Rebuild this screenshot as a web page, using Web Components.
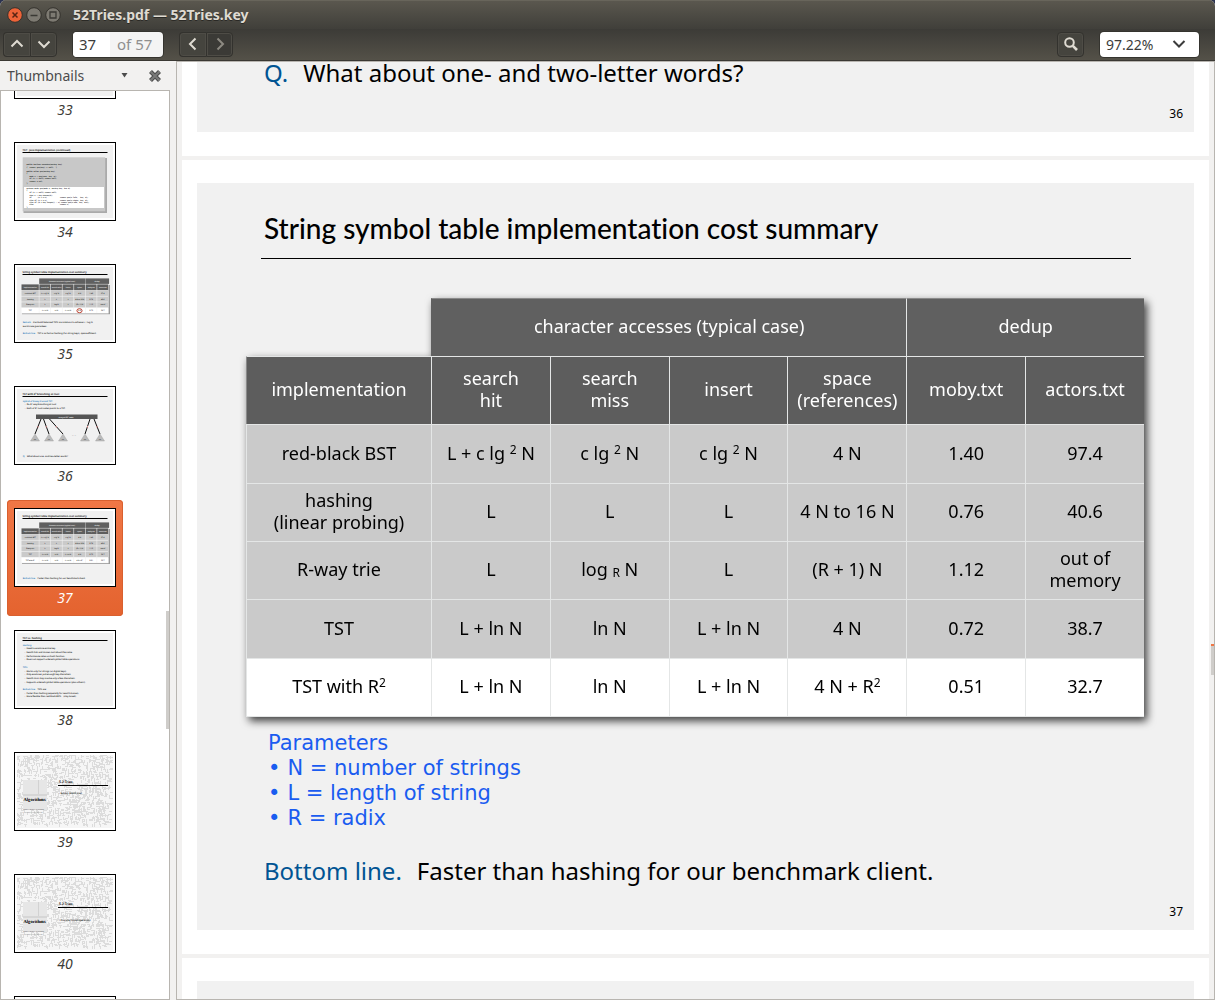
<!DOCTYPE html>
<html lang="en">
<head>
<meta charset="utf-8">
<title>52Tries.pdf — 52Tries.key</title>
<style>
  html, body { height: 100%; margin: 0; }
  body { background: #2c3350; overflow: hidden; font-family: "Noto Sans", "Open Sans", sans-serif; font-size: 14px; color: #3c3b37; }
</style>
</head>
<body>
<pdf-window>
  <pdf-titlebar slot="title">52Tries.pdf — 52Tries.key</pdf-titlebar>
  <pdf-toolbar slot="toolbar"></pdf-toolbar>
  <thumb-panel slot="side">
    <thumb-item page="33" cut></thumb-item>
    <thumb-item page="34"></thumb-item>
    <thumb-item page="35"></thumb-item>
    <thumb-item page="36"></thumb-item>
    <thumb-item page="37" selected></thumb-item>
    <thumb-item page="38"></thumb-item>
    <thumb-item page="39"></thumb-item>
    <thumb-item page="40"></thumb-item>
    <thumb-item page="41" tail></thumb-item>
  </thumb-panel>
  <doc-view slot="main">
    <slide-page cut number="36">
      <slide-line term="Q.">What about one- and two-letter words?</slide-line>
    </slide-page>
    <slide-page number="37" heading="String symbol table implementation cost summary">
      <cost-table></cost-table>
      <param-notes></param-notes>
      <slide-line term="Bottom line.">Faster than hashing for our benchmark client.</slide-line>
    </slide-page>
    <slide-page></slide-page>
  </doc-view>
</pdf-window>

<script>
const define = (name, html, setup) => {
  const tpl = document.createElement('template');
  tpl.innerHTML = html;
  customElements.define(name, class extends HTMLElement {
    constructor() {
      super();
      this.attachShadow({ mode: 'open' }).append(tpl.content.cloneNode(true));
    }
    connectedCallback() { if (setup) setup(this, this.shadowRoot); }
  });
};

define('pdf-window', `
  <style>
    :host { display: flex; flex-direction: column; height: 100vh; border-radius: 6px 6px 0 0; overflow: hidden; background: #f2f1f0; }
    .body { flex: 1; min-height: 0; display: flex; }
  </style>
  <slot name="title"></slot>
  <slot name="toolbar"></slot>
  <div class="body"><slot name="side"></slot><slot name="main"></slot></div>`);

define('pdf-titlebar', `
  <style>
    :host { display: flex; align-items: center; gap: 3px; height: 29px; padding-left: 7px; box-sizing: border-box;
      background: linear-gradient(#5b584f, #403f3a); box-shadow: inset 0 1px #68655b; color: #dfdbd2; }
    button { display: block; width: 16px; height: 16px; padding: 0; border: 0; background: none; }
    svg { display: block; }
    h1 { margin: 0 0 0 9px; font-size: 14px; line-height: 20px; font-weight: 700; text-shadow: 0 1px #2a2925; }
  </style>
  <button aria-label="Close"><svg width="16" height="16"><circle cx="8" cy="8" r="7.3" fill="#ee6338" stroke="#34322d"/><path d="M5.5 5.5l5 5m0-5l-5 5" stroke="#5a2413" stroke-width="1.5"/></svg></button>
  <button aria-label="Minimize"><svg width="16" height="16"><circle cx="8" cy="8" r="7.3" fill="#7d7a72" stroke="#34322d"/><path d="M4.5 8.5h7" stroke="#3a3934" stroke-width="1.3"/></svg></button>
  <button aria-label="Maximize"><svg width="16" height="16"><circle cx="8" cy="8" r="7.3" fill="#7d7a72" stroke="#34322d"/><path d="M5 5h6v6H5z" fill="none" stroke="#3a3934" stroke-width="1.3"/></svg></button>
  <h1><slot></slot></h1>`);

define('pdf-toolbar', `
  <style>
    :host { display: flex; align-items: center; height: 32px; box-sizing: border-box; padding: 0 16px 1px 3px;
      background: linear-gradient(#3c3b37, #545148); border-bottom: 1px solid #3a3833; }
    .group { display: flex; }
    button { display: flex; align-items: center; justify-content: center; width: 27px; height: 25px; padding: 0; box-sizing: border-box;
      background: #45443e; border: 1px solid #33322e; color: #dfdbd2; box-shadow: inset 0 0 0 1px #4e4c46; }
    .group button:first-child { border-radius: 4px 0 0 4px; border-right: 0; }
    .group button:last-child { border-radius: 0 4px 4px 0; }
    .group button:only-child { border-radius: 4px; border-right: 1px solid #33322e; }
    button:disabled { background: #3b3a36; color: #8d8a82; }
    svg { display: block; fill: none; stroke: currentColor; stroke-width: 2; }
    .entry { display: flex; align-items: center; width: 90px; height: 25px; margin: 0 16px; background: #f4f4f4; border-radius: 4px; overflow: hidden; box-shadow: 0 0 0 1px #35342f; }
    input { width: 37px; height: 25px; box-sizing: border-box; padding: 0 0 0 6px; border: 0; background: #fff; font: inherit; font-size: 15px; color: #3c3c3c; }
    .entry span { padding-left: 7px; font-size: 15px; line-height: 25px; color: #8f8f8f; }
    .space { flex: 1; }
    .zoom { display: grid; width: 99px; height: 25px; margin-left: 16px; border-radius: 4px; background: #fff; box-shadow: 0 0 0 1px #35342f; align-items: center; }
    .zoom > * { grid-area: 1 / 1; }
    select { appearance: none; width: 100%; height: 25px; border: 0; padding: 0 0 0 6px; background: none; font: inherit; color: #3c3c3c; }
    .zoom svg { justify-self: end; margin-right: 13px; color: #3c3c3c; pointer-events: none; }
  </style>
  <div class="group">
    <button aria-label="Previous page"><svg width="14" height="14"><path d="M1.500 9.500L7 4l5.500 5.500"/></svg></button>
    <button aria-label="Next page"><svg width="14" height="14"><path d="M1.500 4.500L7 10l5.500-5.500"/></svg></button>
  </div>
  <div class="entry"><input id="pg" value="37" aria-label="Page"><span>of 57</span></div>
  <div class="group">
    <button aria-label="Back"><svg width="14" height="14"><path d="M9.500 1.500L4 7l5.500 5.500"/></svg></button>
    <button aria-label="Forward" disabled><svg width="14" height="14"><path d="M4.500 1.500L10 7l-5.500 5.500"/></svg></button>
  </div>
  <div class="space"></div>
  <div class="group"><button aria-label="Find"><svg width="16" height="16"><circle cx="6.500" cy="6.500" r="4.300"/><path d="M9.800 9.800L14 14" stroke-width="2.600"/></svg></button></div>
  <div class="zoom"><select aria-label="Zoom"><option>97.22%</option></select><svg width="14" height="14"><path d="M1.500 4L7 9.500 12.500 4"/></svg></div>`);

define('thumb-panel', `
  <style>
    :host { display: flex; flex-direction: column; width: 170px; flex: none; margin-right: 6px; }
    header { display: flex; align-items: center; height: 29px; padding: 0 8px 0 7px; }
    header button { display: flex; align-items: center; padding: 0; border: 0; background: none; font: inherit; color: #4c4c4c; line-height: 20px; }
    .pick { flex: 1; justify-content: space-between; }
    .pick svg { margin-right: 20px; }
    svg { display: block; }
    .list { flex: 1; min-height: 0; overflow: hidden; display: flex; background: #fff; border: 1px solid #b8b5b0; }
    .items { flex: 1; display: flex; flex-direction: column; gap: 6px; padding-left: 6px; }
    .bar { width: 3px; height: 118px; margin-top: 520px; background: #cfcdca; }
  </style>
  <header>
    <button class="pick">Thumbnails<svg width="7" height="5"><path d="M.5 0h6l-3 4.500z" fill="#4c4c4c"/></svg></button>
    <button aria-label="Close side pane"><svg width="14" height="14"><path d="M2.500 2.500l9 9m0-9l-9 9" stroke="#4c4c4c" stroke-width="4.200"/><path d="M2.500 2.500l9 9m0-9l-9 9" stroke="#7a7a7a" stroke-width="2"/></svg></button>
  </header>
  <div class="list"><div class="items"><slot></slot></div><div class="bar"></div></div>`);

/* ---- miniature slides, drawn in a 100 x 77 canvas ---- */
const BLUE = '#0067b0';
const text = (x, y, s, size = 2, fill = '#000', extra = '') =>
  `<text x="${x}" y="${y}" font-size="${size}" fill="${fill}" xml:space="preserve" ${extra}>${s}</text>`;
const box = (x, y, w, h, fill) => `<rect x="${x}" y="${y}" width="${w}" height="${h}" fill="${fill}"/>`;
const base = (title) => box(2, 2, 96, 73, '#f1f1f1') + text(7.5, 8, title, 2.6, '#000', 'font-weight="600"') + box(7.5, 9, 85, 1, '#000');
const cols = [6.3, 24.200, 35.700, 47.300, 58.900, 70.400, 82, 93.600];
const heads = ['implementation', 'search hit', 'search miss', 'insert', 'space', 'moby.txt', 'actors.txt'];
const data = [
  ['red-black BST', 'L + c lg² N', 'c lg² N', 'c lg² N', '4 N', '1.40', '97.4'],
  ['hashing', 'L', 'L', 'L', '4 N to 16 N', '0.76', '40.6'],
  ['R-way trie', 'L', 'log N', 'L', '(R + 1) N', '1.12', 'out of'],
  ['TST', 'L + ln N', 'ln N', 'L + ln N', '4 N', '0.72', '38.7'],
  ['TST with R²', 'L + ln N', 'ln N', 'L + ln N', '4 N + R²', '0.51', '32.7']
];
const miniTable = (n) => {
  const mid = 'text-anchor="middle"';
  let s = box(7, 20, 88, 6 + n * 5.800, '#999') + box(24.200, 13.400, 46.200, 5.500, '#606060') + box(70.600, 13.400, 23.500, 5.500, '#606060') +
    text(47, 17, 'character accesses (typical case)', 1.700, '#fff', mid) + text(82, 17, 'dedup', 1.700, '#fff', mid);
  const row = (cells, y, h, bg, fg) => cells.forEach((c, i) => {
    s += box(cols[i] + .2, y + .2, cols[i + 1] - cols[i] - .6, h - .7, bg) + text((cols[i] + cols[i + 1]) / 2, y + h / 2 + .5, c, 1.700, fg, mid);
  });
  s += box(6.3, 19.2, 87.3, 6.5 + n * 5.7, '#f1f1f1');
  row(heads, 19.200, 6.500, '#5d5d5d', '#fff');
  for (let i = 0; i < n; i++) row(data[i], 25.700 + i * 5.700, 5.700, i === n - 1 ? '#fff' : '#cacaca', '#000');
  return s;
};
const cover = (line) => {
  let seed = 7, d = '';
  const rnd = () => (seed = (seed * 16807) % 2147483647) / 2147483647;
  for (let i = 0; i < 1300; i++) {
    const x = 2 + Math.floor(rnd() * 94), y = 2 + Math.floor(rnd() * 70);
    d += rnd() < .5 ? `M${x} ${y}h3v1h-3z` : `M${x} ${y}h1v3h-1z`;
  }
  return box(2, 2, 96, 73, '#f6f6f6') + `<path d="${d}" fill="#dcdcdc" shape-rendering="crispEdges"/>` + box(8, 27, 24, 30, '#e6e6e6') + box(23, 27, 1, 16, '#d2d2d2') +
    box(8, 41, 24, 2, '#d6d6d6') + text(8.5, 48, 'Algorithms', 4.600, '#000', 'font-weight="700" font-family="Liberation Serif"') +
    text(8.5, 57, 'ROBERT SEDGEWICK | KEVIN WAYNE', 1.200) + text(8.5, 60, 'http://algs4.cs.princeton.edu', 1.400, '#777') +
    text(44, 30, '5.2 Tries', 3.4, '#000', 'font-weight="600"') + box(43, 32, 50, 1, '#000') + text(44, line === 0 ? 41 : 46, ['‣ ternary search tries', '‣ character-based operations'][line], 2.300);
};
const lines = (rows) => rows.map(([y, s, fill]) => text(fill ? 7.700 : 8.700, y, s, 2.200, fill || '#000')).join('');
const minis = {
  33: () => base(''),
  34: () => base('TST:  Java implementation (continued)') + box(8.500, 15, 83.500, 55, '#aaa') + box(7.700, 14.300, 82.500, 54, '#c8c8c8') + box(9, 44, 80, 21, '#fff') +
    [[22, 'public boolean contains(String key)'], [25, '{  return get(key) != null;  }'], [29, 'public Value get(String key)'], [31, '{'], [33.700, '   Node x = get(root, key, 0);'], [36, '   if (x == null) return null;'], [39, '   return x.val;'], [41, '}'],
     [46, 'private Node get(Node x, String key, int d)'], [48, '{'], [50, '   if (x == null) return null;'], [53, '   char c = key.charAt(d);'], [55, '   if      (c &lt; x.c)             return get(x.left,  key, d);'], [58, '   else if (c > x.c)             return get(x.right, key, d);'], [60, '   else if (d &lt; key.length() - 1) return get(x.mid, key, d+1);'], [62, '   else                          return x;'], [65, '}']]
      .map(([y, s]) => text(11.500, y, s, 1.700, '#000', 'font-weight="700" font-family="Liberation Mono"')).join(''),
  35: () => base('String symbol table implementation cost summary') + miniTable(4) + `<ellipse cx="64.500" cy="45.700" rx="2.600" ry="2" fill="none" stroke="#b5301f" stroke-width=".9"/>` +
    text(7.700, 58, 'Remark.', 2.200, BLUE) + text(18, 58, 'Can build balanced TSTs via rotations to achieve L + log N', 2.200) + text(7.700, 62, 'worst-case guarantees.', 2.200) +
    text(7.700, 69, 'Bottom line.', 2.200, BLUE) + text(22.500, 69, 'TST is as fast as hashing (for string keys), space efficient.', 2.200),
  36: () => base('TST with R² branching at root') + text(7.700, 15, 'Hybrid of R-way trie and TST.', 2.200, BLUE) + text(9, 18.300, '・ Do R²-way branching at root.', 2.200) + text(9, 22, '・ Each of R² root nodes points to a TST.', 2.200) +
    box(21, 27.500, 61.500, 4.500, '#555') + text(51, 30.700, 'array of 26² roots', 1.800, '#fff', 'text-anchor="middle"') +
    [[26, 20], [28.500, 34], [34.500, 48], [75, 70], [79, 85]].map(([a, b]) => `<path d="M${a} 32L${b} 47" stroke="#111"/><path d="M${(a + b) / 2} 39v1.500" stroke="#d88"/><path d="M${b} 47l4.500 7h-9z" fill="#bbb" stroke="#999" stroke-width=".4"/>` + text(b, 52.500, 'TST', 1.400, '#222', 'text-anchor="middle"')).join('') + text(57, 49, '. . .', 3) +
    text(7.700, 69.500, 'Q.', 2.200, BLUE) + text(12, 69.500, 'What about one- and two-letter words?', 2.200),
  37: () => base('String symbol table implementation cost summary') + miniTable(5) + text(7.700, 69.500, 'Bottom line.', 2.200, BLUE) + text(22.500, 69.500, 'Faster than hashing for our benchmark client.', 2.200),
  38: () => base('TST vs. hashing') + lines([[15, 'Hashing.', BLUE], [18, '・ Need to examine entire key.'], [22, '・ Search hits and misses cost about the same.'], [25.700, '・ Performance relies on hash function.'], [29, '・ Does not support ordered symbol table operations.'],
    [37, 'TSTs.', BLUE], [40.700, '・ Works only for strings (or digital keys).'], [44, '・ Only examines just enough key characters.'], [48, '・ Search miss may involve only a few characters.'], [51.700, '・ Supports ordered symbol table operations (plus others!).'],
    [59, 'Bottom line.', BLUE], [62.700, '・ Faster than hashing (especially for search misses).'], [66, '・ More flexible than red-black BSTs.   [stay tuned]']]) + text(22.500, 59, 'TSTs are:', 2.200),
  39: () => cover(0), 40: () => cover(1), 41: () => base('')
};

define('thumb-item', `
  <style>
    :host { display: block; flex: none; width: 116px; height: 116px; box-sizing: border-box; padding: 8px 7px 0; border-radius: 4px; }
    :host([selected]) { background: linear-gradient(#f07746, #e4632f); box-shadow: inset 0 0 0 1px #d9602f; color: #fff; }
    :host([cut]) { height: 37px; padding-top: 0; }
    .pic { height: 79px; box-sizing: border-box; border: 1px solid #000; background: #fff; overflow: hidden; }
    :host([cut]) .pic { height: 8px; border-top: 0; }
    svg { display: block; width: 100%; height: 100%; font-family: "Noto Sans", sans-serif; font-weight: 500; text-rendering: geometricPrecision; }
    .no { font-style: italic; line-height: 22px; text-align: center; }
  </style>
  <div class="pic"><svg viewBox="0 0 100 77" preserveAspectRatio="xMidYMax slice" aria-hidden="true"></svg></div>
  <div class="no"></div>`, (el, root) => {
  const page = el.getAttribute('page');
  root.querySelector('svg').innerHTML = minis[page]();
  if (el.hasAttribute('tail')) root.querySelector('.no').remove();
  else root.querySelector('.no').textContent = page;
});

define('doc-view', `
  <style>
    :host { display: flex; flex: 1; min-width: 0; overflow: hidden; border: 1px solid #b8b5b0; background: #f2f1f0; box-sizing: border-box; }
    .pages { flex: 1; min-width: 0; display: flex; flex-direction: column; gap: 4px; padding-left: 5px; }
    .bar { width: 3px; height: 31px; margin: 582px 0 0 2px; box-sizing: border-box; background: #cfcdca; border-top: 2px solid #f07746; }
  </style>
  <div class="pages"><slot></slot></div><div class="bar"></div>`);

define('slide-page', `
  <style>
    :host { display: block; flex: none; background: #fff; padding: 23px 15px 24px; color: #000; }
    :host([cut]) { padding-top: 0; }
    section { display: flex; flex-direction: column; min-height: 70px; padding: 0 50px 0 49px; background: #f1f1f1; }
    header { margin: 0 13px 39px 15px; padding: 25px 0 10px 3px; border-bottom: 1px solid #000; }
    h2 { margin: 0; font: 500 28px/40px Lato, sans-serif; font-variant-ligatures: none; }
    footer { align-self: flex-end; margin: auto -39px 9px 0; font-size: 12px; line-height: 18px; }
  </style>
  <section><header><h2></h2></header><slot></slot><footer></footer></section>`, (el, root) => {
  const h = el.getAttribute('heading');
  if (h) root.querySelector('h2').textContent = h; else root.querySelector('header').remove();
  root.querySelector('footer').textContent = el.getAttribute('number');
});

define('slide-line', `
  <style>
    :host { display: flex; gap: 15px; margin-left: 18px; font-size: 24px; line-height: 36px; white-space: nowrap; }
    b { font-weight: 400; color: #005493; }
    :host([term="Q."]) { line-height: 22px; margin-bottom: 21px; }
    :host(:not([term="Q."])) { margin: 22px 0 14px 18px; }
  </style>
  <b></b><span><slot></slot></span>`, (el, root) => { root.querySelector('b').textContent = el.getAttribute('term'); });

define('param-notes', `
  <style>
    :host { display: block; margin: 14px 0 0 22px; font: 21px/25px "DejaVu Sans", sans-serif; color: #1a5cf0; }
    p, ul { margin: 0; padding: 0; list-style: none; }
    li { display: flex; gap: 7px; }
    li::before { content: "•"; }
  </style>
  <p>Parameters</p>
  <ul><li>N = number of strings</li><li>L = length of string</li><li>R = radix</li></ul>`);

define('cost-table', `
  <style>
    :host { display: block; filter: drop-shadow(3px 4px 4px rgba(0,0,0,.75)); }
    table { width: 100%; table-layout: fixed; border-collapse: separate; border-spacing: 0; font-size: 18px; line-height: 22px; text-align: center; }
    col:first-child { width: 185px; }
    th, td { padding: 0 0 3px; font-weight: 400; box-sizing: border-box; border: 0 solid #e4e6e6; border-width: 1px 0 0 1px; }
    thead th { background: #5d5d5d; color: #fff; }
    .top th { height: 58px; border-top-color: #8a8a8a; background: #606060; }
    .top td { border: 0; }
    .top td + th { border-left-color: #606060; }
    .sub th { height: 68px; }
    .sub th:first-child { border-left-color: #8a8a8a; }
    tbody th, tbody td { height: 58px; background: #cacaca; }
    tbody tr:nth-child(3n+1) > * { height: 59px; }
    tbody tr:last-child > * { height: 59px; background: #fff; border-bottom-width: 1px; }
    sup, sub { font-size: 12px; line-height: 0; }
    sup { vertical-align: 6px; } sub { vertical-align: -1px; }
  </style>
  <table>
    <colgroup><col><col><col><col><col><col><col></colgroup>
    <thead>
      <tr class="top"><td></td><th colspan="4">character accesses (typical case)</th><th colspan="2">dedup</th></tr>
      <tr class="sub"><th>implementation</th><th>search<br>hit</th><th>search<br>miss</th><th>insert</th><th>space<br>(references)</th><th>moby.txt</th><th>actors.txt</th></tr>
    </thead>
    <tbody>
      <tr><th>red-black BST</th><td>L + c lg <sup>2</sup> N</td><td>c lg <sup>2</sup> N</td><td>c lg <sup>2</sup> N</td><td>4 N</td><td>1.40</td><td>97.4</td></tr>
      <tr><th>hashing<br>(linear probing)</th><td>L</td><td>L</td><td>L</td><td>4 N to 16 N</td><td>0.76</td><td>40.6</td></tr>
      <tr><th>R-way trie</th><td>L</td><td>log <sub>R</sub> N</td><td>L</td><td>(R + 1) N</td><td>1.12</td><td>out of<br>memory</td></tr>
      <tr><th>TST</th><td>L + ln N</td><td>ln N</td><td>L + ln N</td><td>4 N</td><td>0.72</td><td>38.7</td></tr>
      <tr><th>TST with R<sup>2</sup></th><td>L + ln N</td><td>ln N</td><td>L + ln N</td><td>4 N + R<sup>2</sup></td><td>0.51</td><td>32.7</td></tr>
    </tbody>
  </table>`);
</script>
</body>
</html>
